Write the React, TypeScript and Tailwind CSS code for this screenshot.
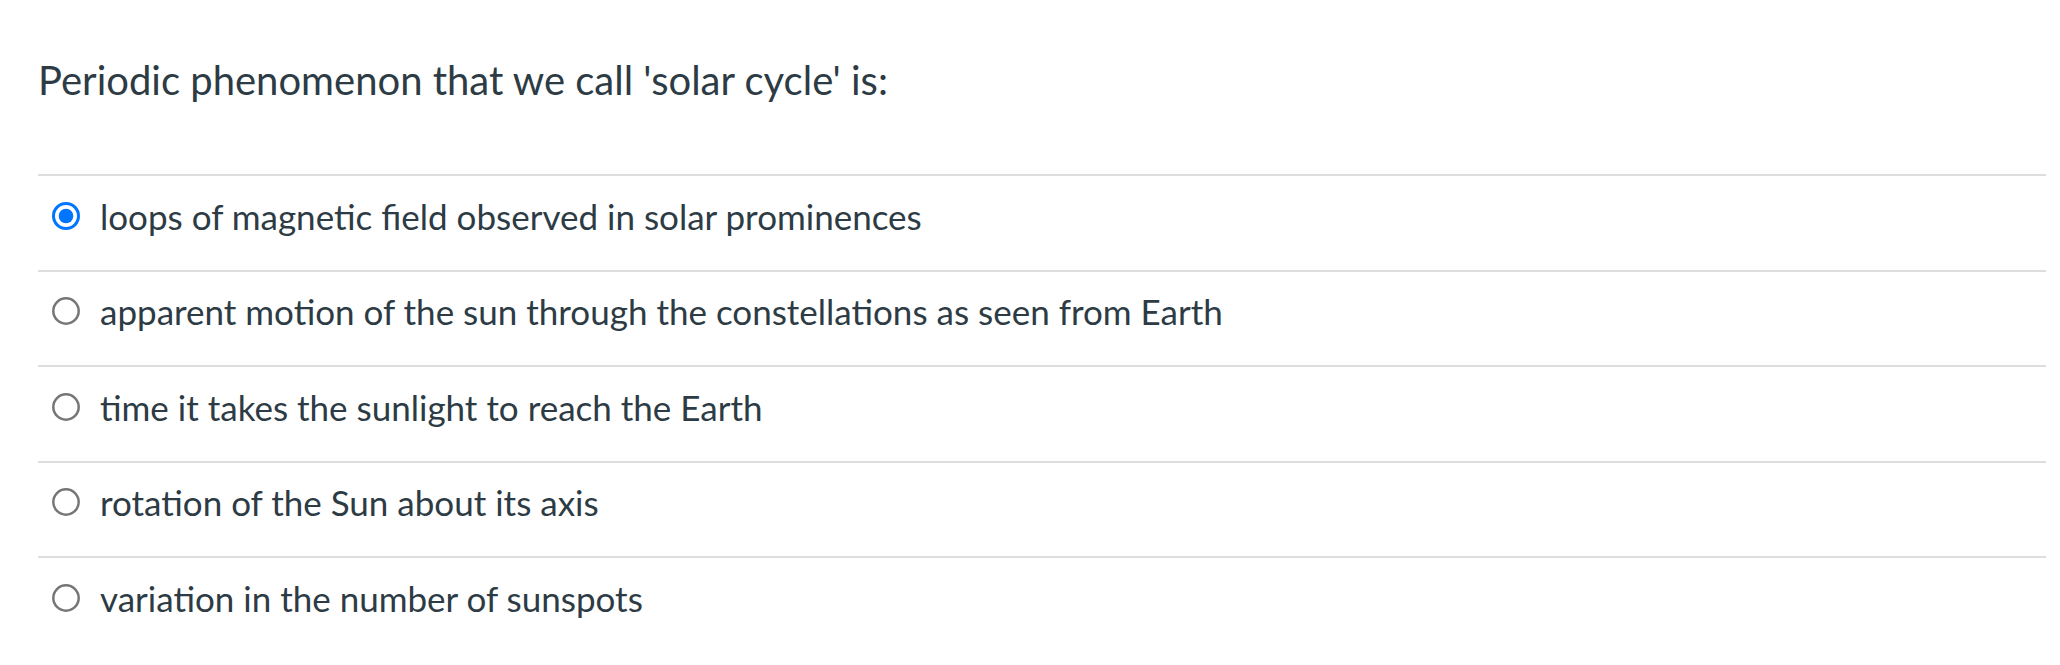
import React from "react";

const answers = [
  { text: "loops of magnetic field observed in solar prominences", checked: true },
  { text: "apparent motion of the sun through the constellations as seen from Earth", checked: false },
  { text: "time it takes the sunlight to reach the Earth", checked: false },
  { text: "rotation of the Sun about its axis", checked: false },
  { text: "variation in the number of sunspots", checked: false },
];

const Radio: React.FC<{ checked: boolean }> = ({ checked }) => (
  <svg width="28" height="28" viewBox="0 0 28 28" className="shrink-0">
    {checked ? (
      <>
        <circle cx="14" cy="14" r="12.5" fill="white" stroke="#0075ff" strokeWidth="3" />
        <circle cx="14" cy="14" r="7.3" fill="#0075ff" />
      </>
    ) : (
      <circle cx="14" cy="14" r="12.7" fill="white" stroke="#767676" strokeWidth="2.5" />
    )}
  </svg>
);

export default function App() {
  return (
    <div className="w-full h-[665px] bg-white pl-[38px] pr-[14px] text-[#2d3b45] font-['Lato','Liberation_Sans',sans-serif]">
      <h1 className="pt-[55.5px] text-[40px] leading-[1.2] font-normal">
        Periodic phenomenon that we call 'solar cycle' is:
      </h1>
      <div className="mt-[70.5px]">
        {answers.map((a) => (
          <div key={a.text} className="h-[95.5px] border-t-2 border-[#dddddd] pt-[18.5px]">
            <label className="flex items-center gap-[20px] pl-[14px] text-[35px] leading-[1.2]">
              <Radio checked={a.checked} />
              <span>{a.text}</span>
            </label>
          </div>
        ))}
      </div>
    </div>
  );
}
